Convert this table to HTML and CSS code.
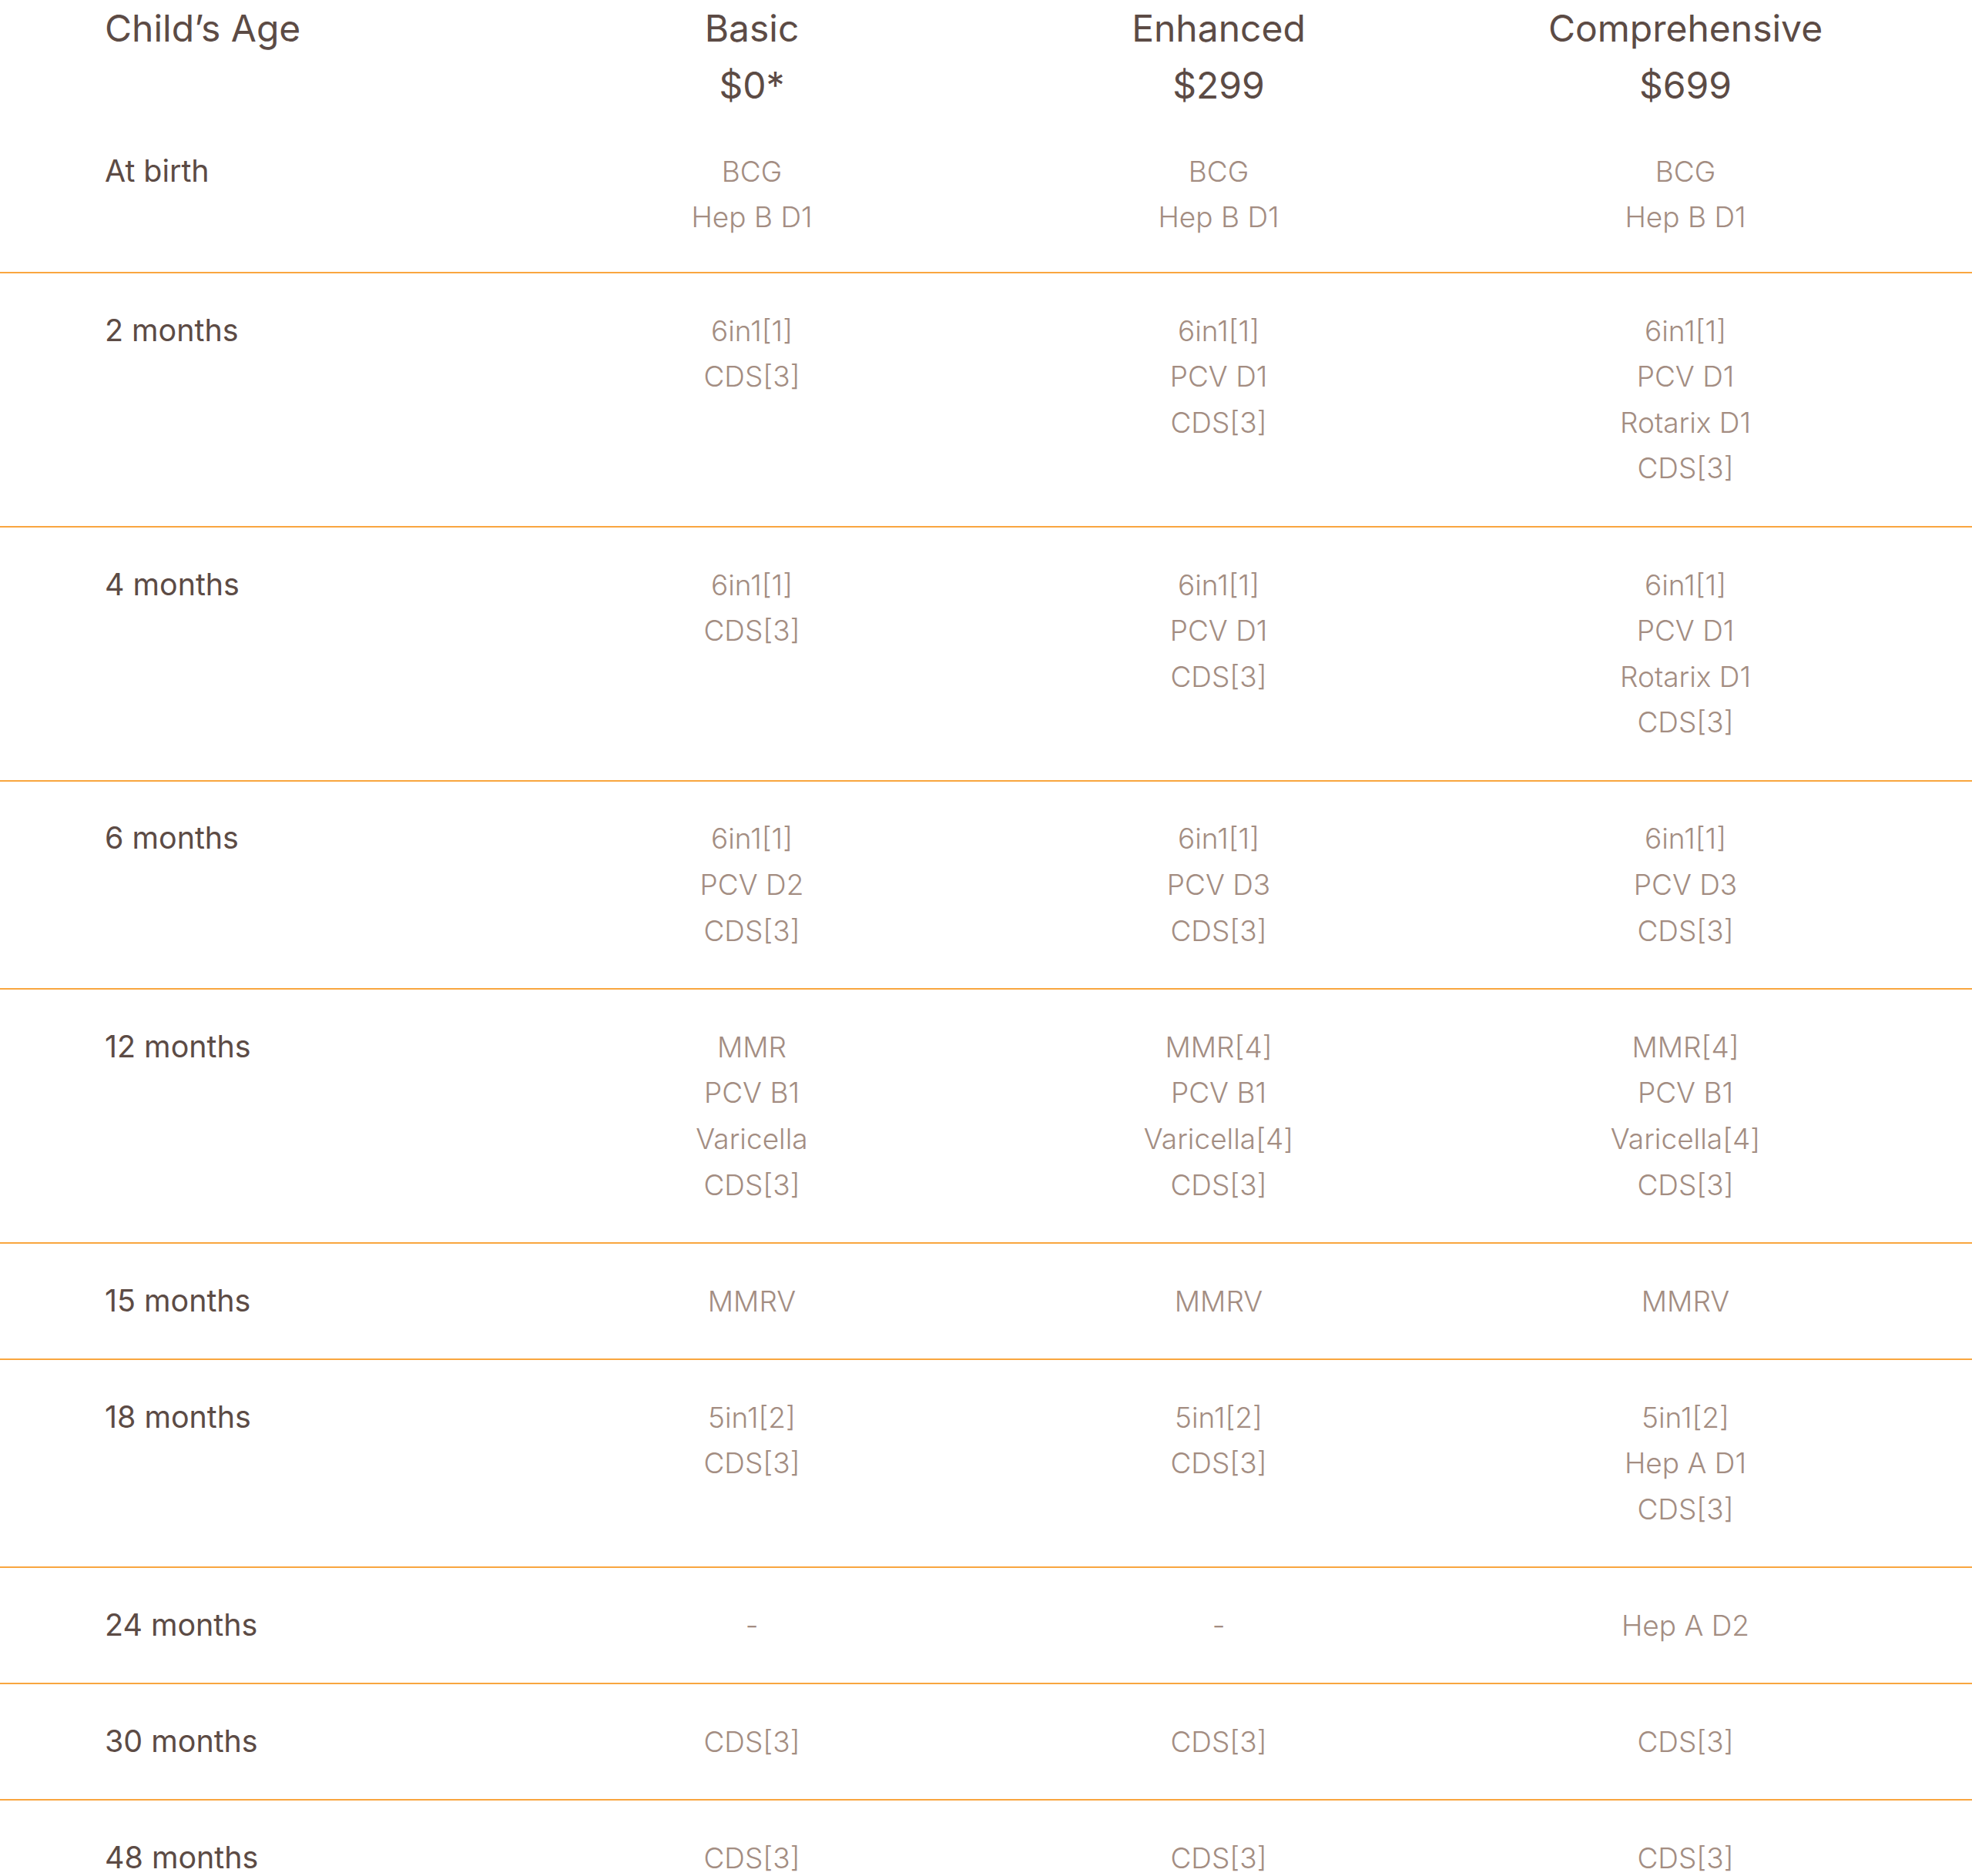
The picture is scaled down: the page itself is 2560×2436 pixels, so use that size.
FILE: index.html
```html
<!DOCTYPE html>
<html lang="en">
<head>
<meta charset="utf-8">
<title>Vaccination Packages</title>
<link rel="stylesheet" href="styles.css">
</head>
<body>
<div class="schedule">
  <div class="row head">
    <div class="age-title">Child’s Age</div>
    <div class="plan"><div>Basic</div><div>$0*</div></div>
    <div class="plan"><div>Enhanced</div><div>$299</div></div>
    <div class="plan"><div>Comprehensive</div><div>$699</div></div>
  </div>

  <div class="row first">
    <div class="age">At birth</div>
    <div class="cell"><div>BCG</div><div>Hep B D1</div></div>
    <div class="cell"><div>BCG</div><div>Hep B D1</div></div>
    <div class="cell"><div>BCG</div><div>Hep B D1</div></div>
  </div>

  <div class="row">
    <div class="age">2 months</div>
    <div class="cell"><div>6in1[1]</div><div>CDS[3]</div></div>
    <div class="cell"><div>6in1[1]</div><div>PCV D1</div><div>CDS[3]</div></div>
    <div class="cell"><div>6in1[1]</div><div>PCV D1</div><div>Rotarix D1</div><div>CDS[3]</div></div>
  </div>

  <div class="row">
    <div class="age">4 months</div>
    <div class="cell"><div>6in1[1]</div><div>CDS[3]</div></div>
    <div class="cell"><div>6in1[1]</div><div>PCV D1</div><div>CDS[3]</div></div>
    <div class="cell"><div>6in1[1]</div><div>PCV D1</div><div>Rotarix D1</div><div>CDS[3]</div></div>
  </div>

  <div class="row">
    <div class="age">6 months</div>
    <div class="cell"><div>6in1[1]</div><div>PCV D2</div><div>CDS[3]</div></div>
    <div class="cell"><div>6in1[1]</div><div>PCV D3</div><div>CDS[3]</div></div>
    <div class="cell"><div>6in1[1]</div><div>PCV D3</div><div>CDS[3]</div></div>
  </div>

  <div class="row">
    <div class="age">12 months</div>
    <div class="cell"><div>MMR</div><div>PCV B1</div><div>Varicella</div><div>CDS[3]</div></div>
    <div class="cell"><div>MMR[4]</div><div>PCV B1</div><div>Varicella[4]</div><div>CDS[3]</div></div>
    <div class="cell"><div>MMR[4]</div><div>PCV B1</div><div>Varicella[4]</div><div>CDS[3]</div></div>
  </div>

  <div class="row">
    <div class="age">15 months</div>
    <div class="cell"><div>MMRV</div></div>
    <div class="cell"><div>MMRV</div></div>
    <div class="cell"><div>MMRV</div></div>
  </div>

  <div class="row">
    <div class="age">18 months</div>
    <div class="cell"><div>5in1[2]</div><div>CDS[3]</div></div>
    <div class="cell"><div>5in1[2]</div><div>CDS[3]</div></div>
    <div class="cell"><div>5in1[2]</div><div>Hep A D1</div><div>CDS[3]</div></div>
  </div>

  <div class="row">
    <div class="age">24 months</div>
    <div class="cell"><div>-</div></div>
    <div class="cell"><div>-</div></div>
    <div class="cell"><div>Hep A D2</div></div>
  </div>

  <div class="row">
    <div class="age">30 months</div>
    <div class="cell"><div>CDS[3]</div></div>
    <div class="cell"><div>CDS[3]</div></div>
    <div class="cell"><div>CDS[3]</div></div>
  </div>

  <div class="row">
    <div class="age">48 months</div>
    <div class="cell"><div>CDS[3]</div></div>
    <div class="cell"><div>CDS[3]</div></div>
    <div class="cell"><div>CDS[3]</div></div>
  </div>
</div>
</body>
</html>
```
FILE: styles.css
```css
html, body {
  margin: 0;
  padding: 0;
  background: #ffffff;
}

body {
  font-family: "Inter", "Open Sans", sans-serif;
  color: #5c4b45;
}

.schedule {
  width: 100%;
}

.row {
  display: grid;
  grid-template-columns: 537px repeat(3, 606px);
  padding: 44.75px 0 44.75px 136px;
  border-bottom: 2px solid #f9a63f;
}

.row.head {
  padding: 0 0 0 136px;
  border-bottom: none;
}

.row.first {
  padding-bottom: 41px;
}

.age-title,
.plan {
  font-size: 48px;
  line-height: 74px;
  font-weight: 400;
  color: #5c4b45;
}

.plan {
  text-align: center;
}

.age {
  font-size: 39.4px;
  line-height: 59.6px;
  font-weight: 400;
  color: #5c4b45;
}

.cell {
  text-align: center;
  font-size: 37px;
  line-height: 59.6px;
  font-weight: 300;
  color: #a38d82;
}
```
